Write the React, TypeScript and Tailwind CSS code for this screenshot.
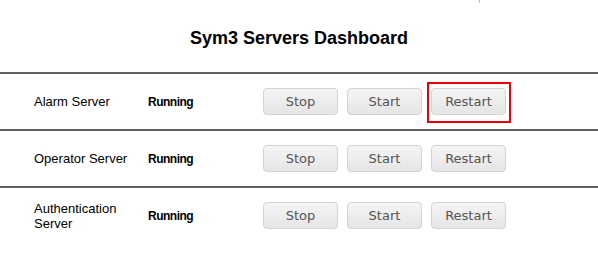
import React from 'react';

const servers = [
    { name: 'Alarm Server', status: 'Running', marked: true },
    { name: 'Operator Server', status: 'Running', marked: false },
    { name: 'Authentication Server', status: 'Running', marked: false },
];

const ActionButton = ({ label, marked }: { label: string; marked?: boolean }) => (
    <button
        type="button"
        className="relative h-[27px] w-[75px] rounded-[4px] border border-[#d3d3d3] bg-gradient-to-b from-[#f5f5f5] to-[#e5e5e5] text-[13px] text-[#555] [font-family:'DejaVu_Sans',Verdana,sans-serif]"
    >
        {label}
        {marked && (
            // red highlight box drawn over the button
            <span className="pointer-events-none absolute -left-[5px] -right-[6px] -top-[7px] -bottom-[9px] border-2 border-[#e8000b]" />
        )}
    </button>
);

const App = () => {
    return (
        <div className="relative h-[272px] w-[598px] overflow-hidden bg-white text-black [font-family:'Liberation_Sans',Arial,sans-serif]">
            <div className="absolute left-[479px] top-0 h-[3px] w-px bg-[#bbb]" />
            <div className="pt-[28px] pb-[24px]">
                <h1 className="text-center text-[18px] font-bold leading-[20px]">Sym3 Servers Dashboard</h1>
            </div>
            {servers.map((s) => (
                <div key={s.name} className="flex h-[57px] items-center border-t-2 border-[#5f5f5f]">
                    <div className="ml-[34px] w-[114px] pr-[14px] text-[13px] leading-[15px]">{s.name}</div>
                    <div className="w-[115px] text-[12px] font-bold tracking-[-0.5px]">{s.status}</div>
                    <div className="flex gap-[9px]">
                        <ActionButton label="Stop" />
                        <ActionButton label="Start" />
                        <ActionButton label="Restart" marked={s.marked} />
                    </div>
                </div>
            ))}
        </div>
    );
};

export default App;
